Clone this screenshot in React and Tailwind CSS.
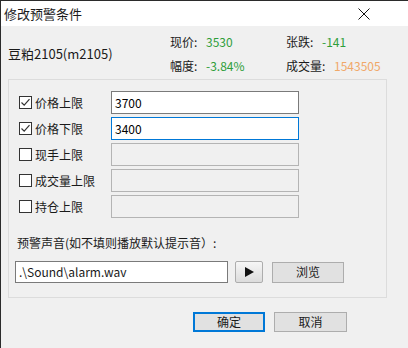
import React from "react";

const F = { fontFamily: '"Microsoft YaHei", "Noto Sans CJK SC", sans-serif' };

function Check({ checked }) {
  return (
    <div className="w-[13px] h-[13px] border border-[#333333] bg-white flex items-center justify-center shrink-0">
      {checked && (
        <svg width="11" height="11" viewBox="0 0 11 11">
          <path d="M1.5 5.5 L4.2 8.2 L9.5 2.2" fill="none" stroke="#333" strokeWidth="1.2" />
        </svg>
      )}
    </div>
  );
}

function Row({ label, checked, value, focus }) {
  const box = focus
    ? "bg-white border-[#0078d7]"
    : checked
    ? "bg-white border-[#7a7a7a]"
    : "bg-[#f0f0f0] border-[#b4b4b4]";
  return (
    <div className="flex items-center h-[23px]">
      <div className="w-[92px] flex items-center gap-[3px]">
        <Check checked={checked} />
        <span className="text-[12px] text-[#1a1a1a] leading-none">{label}</span>
      </div>
      <div className={`w-[188px] h-[23px] border ${box} flex items-center pl-[3px] text-[12px] text-black`}>
        {value}
      </div>
    </div>
  );
}

export default function App() {
  return (
    <div style={F} className="w-[408px] h-[348px] bg-[#f0f0f0] border-t border-l border-[#2b2b2b] flex flex-col text-[#1a1a1a]">
      <div className="h-[25px] bg-white flex items-center justify-between pl-[3px] pr-[38px]">
        <span className="text-[13px] leading-none">修改预警条件</span>
        <svg width="12" height="12" viewBox="0 0 12 12">
          <path d="M0.5 0.5 L11.5 11.5 M11.5 0.5 L0.5 11.5" stroke="#111" strokeWidth="1" />
        </svg>
      </div>
      <div className="h-[53px] flex items-center">
        <div className="w-[169px] pl-[7px] text-[13px] leading-none pt-[1px]">豆粕2105(m2105)</div>
        <div className="grid grid-cols-[116px_120px] gap-y-[12px] text-[12px] leading-none pt-[2px]">
          <div className="flex"><span className="w-[36px]">现价:</span><span className="text-[#2e9e3a]">3530</span></div>
          <div className="flex"><span className="w-[36px]">张跌:</span><span className="text-[#2e9e3a]">-141</span></div>
          <div className="flex"><span className="w-[36px]">幅度:</span><span className="text-[#2e9e3a]">-3.84%</span></div>
          <div className="flex"><span className="w-[48px]">成交量:</span><span className="text-[#f0a868]">1543505</span></div>
        </div>
      </div>
      <div className="ml-[7px] w-[379px] h-[219px] border border-[#dcdcdc] pl-[10px] pt-[11px] flex flex-col">
        <div className="flex flex-col gap-[3px]">
          <Row label="价格上限" checked value="3700" />
          <Row label="价格下限" checked value="3400" focus />
          <Row label="现手上限" />
          <Row label="成交量上限" />
          <Row label="持仓上限" />
        </div>
        <div className="mt-[19px] -ml-[2px] text-[12px] leading-none">预警声音(如不填则播放默认提示音）:</div>
        <div className="mt-[12px] flex items-center -ml-[4px]">
          <div className="w-[213px] h-[22px] bg-white border border-[#7a7a7a] flex items-center pl-[3px] text-[12px]">.\Sound\alarm.wav</div>
          <div className="ml-[7px] w-[28px] h-[22px] border border-[#adadad] rounded-[2px] bg-gradient-to-b from-[#f6f6f6] to-[#dcdcdc] flex items-center justify-center">
            <svg width="9" height="10" viewBox="0 0 9 10"><path d="M0 0 L9 5 L0 10 Z" fill="#111" /></svg>
          </div>
          <div className="ml-[9px] w-[72px] h-[21px] border border-[#adadad] bg-[#e1e1e1] flex items-center justify-center text-[12px]">浏览</div>
        </div>
      </div>
      <div className="mt-[14px] flex pl-[192px] gap-[9px]">
        <div className="w-[72px] h-[20px] border-2 border-[#0078d7] bg-[#e1e1e1] flex items-center justify-center text-[12px]">确定</div>
        <div className="w-[73px] h-[20px] border border-[#adadad] bg-[#e1e1e1] flex items-center justify-center text-[12px]">取消</div>
      </div>
    </div>
  );
}
